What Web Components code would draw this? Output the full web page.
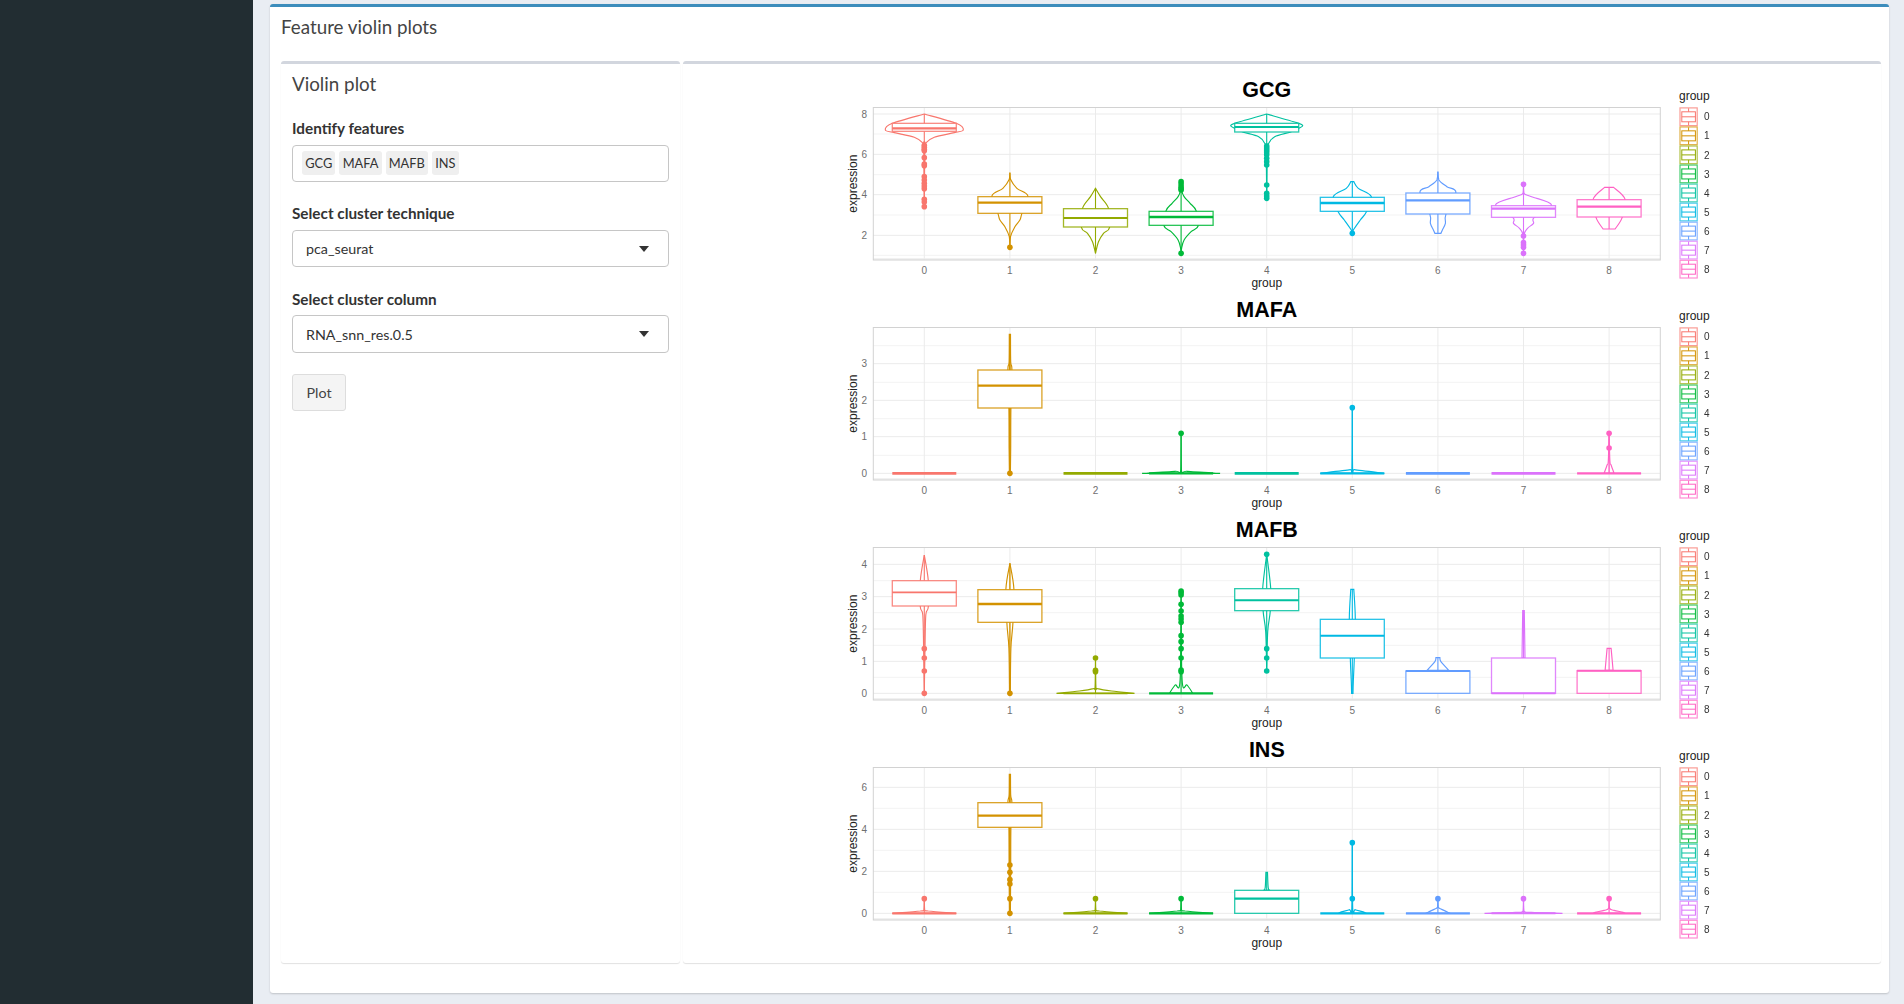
<!DOCTYPE html>
<html lang="en">
<head>
<meta charset="utf-8">
<title>Feature violin plots</title>
<style>
  html, body { margin: 0; height: 100%; overflow: hidden; background: #e9edf3; }
  body { font-family: Lato, "Noto Sans", sans-serif; color: #333; }
</style>
</head>
<body>
<dash-shell>
  <plot-card heading="Feature violin plots">
    <sub-box slot="left">
      <h3-title>Violin plot</h3-title>
      <form-field label="Identify features" first>
        <chip-input><tag-chip>GCG</tag-chip><tag-chip>MAFA</tag-chip><tag-chip>MAFB</tag-chip><tag-chip>INS</tag-chip></chip-input>
      </form-field>
      <form-field label="Select cluster technique">
        <select-box>pca_seurat</select-box>
      </form-field>
      <form-field label="Select cluster column" tight>
        <select-box tall>RNA_snn_res.0.5</select-box>
      </form-field>
      <plain-button>Plot</plain-button>
    </sub-box>
    <sub-box slot="right" plots>
      <violin-plot feature="GCG"></violin-plot>
      <violin-plot feature="MAFA"></violin-plot>
      <violin-plot feature="MAFB"></violin-plot>
      <violin-plot feature="INS"></violin-plot>
    </sub-box>
  </plot-card>
</dash-shell>

<script>
// ggplot default hues, one per cluster
const HUES = ["#F8766D", "#D39200", "#93AA00", "#00BA38", "#00C19F", "#00B9E3", "#619CFF", "#DB72FB", "#FF61C3"];

// all y values below are read off 3x crops: y = crop pixel, hw = half width in real px
const FLAT = { v: [], b: [535, 535, 535], mw: 2.6 };
const FEATURES = {
  GCG: {
    shift: -12,
    ticks: [[8, 162], [6, 283], [4, 404], [2, 526]],
    minor: [222, 344, 465, 586],
    groups: [
      { v: [[162, 0], [190, 32], [210, 39], [218, 30], [232, 10], [250, 1], [262, .5], [440, 0]], b: [190, 205, 214], w: [162, 440], p: [256, 262, 268, 272, 293, 312, 317, 350, 360, 370, 378, 386, 418, 426, 440], mw: 2.4 },
      { v: [[338, 0], [358, .6], [385, 7], [408, 18], [460, 12], [480, 10], [500, 5], [530, .6], [562, 0]], b: [410, 428, 460], w: [338, 562], p: [562], mw: 2.4 },
      { v: [[385, 0], [410, 5], [445, 13], [503, 14], [520, 8], [545, 3], [580, 0]], b: [446, 474, 501], w: [385, 580], p: [], mw: 2 },
      { v: [[365, 0], [390, .5], [410, 3], [430, 9], [452, 15], [498, 17], [515, 10], [540, 3], [565, .5], [580, 0]], b: [454, 471, 496], w: [365, 580], p: [365, 372, 380, 386, 390, 580], mw: 2.4 },
      { v: [[162, 0], [188, 30], [197, 36], [205, 32], [216, 24], [230, 8], [250, 2], [270, .6], [415, 0]], b: [190, 201, 216], w: [162, 415], p: [258, 264, 270, 276, 284, 295, 305, 315, 375, 400, 408, 415], mw: 2 },
      { v: [[365, 1.5], [385, 6], [410, 19], [456, 14], [480, 8], [510, 1], [520, 0]], b: [412, 429, 454], w: [365, 520], p: [520], mw: 2.4 },
      { v: [[335, 0], [360, 1], [380, 9], [397, 18], [463, 8], [490, 7.5], [510, 4.5], [520, 3]], b: [399, 421, 462], w: [335, 520], p: [], mw: 2.2 },
      { v: [[373, 0], [400, .5], [410, 8], [435, 28], [473, 10.5], [490, 10], [505, 4], [525, .5], [580, 0]], b: [437, 446, 472], w: [373, 580], p: [373, 528, 548, 555, 562, 580], mw: 2.2 },
      { v: [[382, 4.5], [418, 16], [473, 13], [507, 6]], b: [419, 440, 471], w: [382, 507], p: [], mw: 2.2 }
    ]
  },
  MAFA: {
    shift: 3,
    ticks: [[3, 206], [2, 316], [1, 425], [0, 535]],
    minor: [152, 262, 371, 481],
    groups: [
      FLAT,
      { v: [[118, .6], [200, .8], [225, 2], [339, 1], [460, .8], [535, .5]], b: [225, 272, 339], w: [118, 535], p: [535], mw: 2.2, ww: 1.8 },
      FLAT,
      { v: [[415, 0], [525, .3], [529, 6], [535, 39]], b: [535, 535, 535], w: [415, 535], p: [415], mw: 2.2 },
      FLAT,
      { v: [[338, 0], [520, .3], [524, 2], [535, 32]], b: [535, 535, 535], w: [338, 535], p: [338], mw: 2.2 },
      FLAT,
      FLAT,
      { v: [[415, 0], [498, .8], [510, 2], [535, 5]], b: [535, 535, 535], w: [415, 535], p: [415, 459], mw: 2.2, ww: 1.4 }
    ]
  },
  MAFB: {
    shift: 3,
    ticks: [[4, 148], [3, 245], [2, 342], [1, 439], [0, 535]],
    minor: [197, 293, 391, 487],
    groups: [
      { v: [[120, 0], [197, 4], [275, 4], [300, 1.5], [400, .7], [535, 0]], b: [197, 232, 273], w: [120, 535], p: [401, 429, 468, 535], mw: 1.8 },
      { v: [[145, 0], [222, 4], [325, 3], [400, 1], [535, .4]], b: [224, 267, 322], w: [145, 535], p: [535], mw: 2.4, ww: 1.4 },
      { v: [[429, 0], [516, .4], [521, 2], [528, 16], [535, 39]], b: [535, 535, 535], w: [429, 535], p: [429, 466, 470], mw: 1.8 },
      { v: [[228, 0], [495, 1], [510, 6], [532, 11], [535, 11]], b: [535, 535, 535], w: [228, 535], p: [228, 233, 240, 268, 288, 303, 312, 322, 362, 380, 401, 429, 465, 470], mw: 2.2 },
      { v: [[118, 0], [220, 4], [290, 3.5], [350, 1], [468, 0]], b: [221, 256, 287], w: [118, 468], p: [118, 401, 429, 468], mw: 2 },
      { v: [[223, 1.5], [312, 3], [430, 2], [500, 1], [535, .7]], b: [313, 362, 429], w: [223, 535], p: [], mw: 2 },
      { v: [[428, 2], [440, 3], [466, 11]], b: [468, 468, 535], w: [428, 468], p: [], mw: 2 },
      { v: [[287, .8], [429, 1.5]], b: [429, 535, 535], w: [287, 429], p: [], mw: 2 },
      { v: [[400, 2], [466, 4]], b: [467, 467, 535], w: [400, 467], p: [], mw: 2 }
    ]
  },
  INS: {
    shift: 3,
    ticks: [[6, 157], [4, 283], [2, 409], [0, 535]],
    minor: [220, 346, 472],
    groups: [
      { v: [[491, 0], [524, .4], [528, 4], [535, 32]], b: [535, 535, 535], w: [491, 535], p: [491], mw: 2.4 },
      { v: [[118, .6], [180, .8], [203, 2], [277, 1], [400, .8], [535, .5]], b: [203, 242, 277], w: [118, 535], p: [390, 412, 434, 447, 491, 535], mw: 2.2, ww: 1.8 },
      { v: [[491, 0], [524, .4], [528, 4], [535, 32]], b: [535, 535, 535], w: [491, 535], p: [491], mw: 2.4 },
      { v: [[491, 0], [524, .4], [528, 4], [535, 32]], b: [535, 535, 535], w: [491, 535], p: [491], mw: 2.4 },
      { v: [[412, .8], [458, 1.5], [466, 3]], b: [466, 491, 535], w: [412, 466], p: [], mw: 2.4 },
      { v: [[323, 0], [518, .4], [524, 3], [530, 10], [535, 14]], b: [535, 535, 535], w: [323, 535], p: [323, 491], mw: 2.2 },
      { v: [[491, 0], [516, .4], [522, 3], [530, 9], [535, 12]], b: [535, 535, 535], w: [491, 535], p: [491], mw: 2.4 },
      { v: [[491, 0], [528, .5], [532, 8], [535, 39]], b: [535, 535, 535], w: [491, 535], p: [491], mw: 2 },
      { v: [[491, 0], [520, .4], [526, 5], [532, 14], [535, 16]], b: [535, 535, 535], w: [491, 535], p: [491], mw: 2.2 }
    ]
  }
};

class DashShell extends HTMLElement {
  constructor() {
    super();
    this.attachShadow({ mode: "open" }).innerHTML = `
    <style>
    :host { display: grid; grid-template-columns: 253px 1fr; height: 1004px; }
    aside { background: #222d32; }
    main { padding: 4px 15px 11px 17px; min-width: 0; }
    </style>
    <aside></aside>
    <main><slot></slot></main>`;
  }
}
customElements.define("dash-shell", DashShell);

class PlotCard extends HTMLElement {
  constructor() {
    super();
    this.attachShadow({ mode: "open" }).innerHTML = `
    <style>
    :host {
      display: flex;
      flex-direction: column;
      height: 989px;
      box-sizing: border-box;
      background: #fff;
      border-top: 3px solid #3c8dbc;
      border-radius: 3px;
      box-shadow: 0 1px 2px rgba(0, 0, 0, .18);
    }
    header {
      height: 54px;
      box-sizing: border-box;
      padding: 8px 0 0 11px;
      font-size: 18.8px;
      line-height: 24px;
      color: #444;
    }
    .row {
      display: grid;
      grid-template-columns: 398.5px 1198px;
      gap: 3.5px;
      padding-left: 11px;
    }
    </style>
    <header></header>
    <div class="row"><slot name="left"></slot><slot name="right"></slot></div>`;
    this.shadowRoot.querySelector("header").textContent = this.getAttribute("heading");
  }
}
customElements.define("plot-card", PlotCard);

class SubBox extends HTMLElement {
  constructor() {
    super();
    this.attachShadow({ mode: "open" }).innerHTML = `
    <style>
    :host {
      display: flex;
      flex-direction: column;
      height: 902px;
      box-sizing: border-box;
      border-top: 3px solid #d2d6de;
      border-radius: 3px;
      box-shadow: 0 1px 1px rgba(0, 0, 0, .12);
      padding: 8px 11px 0 11px;
    }
    :host([plots]) { padding: 8px 0 0; align-items: center; }
    </style>
    <slot></slot>`;
  }
}
customElements.define("sub-box", SubBox);

class H3Title extends HTMLElement {
  constructor() {
    super();
    this.attachShadow({ mode: "open" }).innerHTML = `
    <style>
    :host { display: block; font-size: 18.8px; line-height: 24px; color: #444; margin-bottom: 20px; }
    </style>
    <slot></slot>`;
  }
}
customElements.define("h3-title", H3Title);

class FormField extends HTMLElement {
  constructor() {
    super();
    this.attachShadow({ mode: "open" }).innerHTML = `
    <style>
    :host { display: block; margin-bottom: 20px; }
    :host([first]) { margin-bottom: 19px; }
    :host([tight]) { margin-bottom: 21px; }
    label { display: block; font-size: 15.3px; font-weight: 700; line-height: 24px; margin-bottom: 5px; color: #333; }
    :host([tight]) label { margin-bottom: 4px; }
    </style>
    <label></label>
    <slot></slot>`;
    this.shadowRoot.querySelector("label").textContent = this.getAttribute("label");
  }
}
customElements.define("form-field", FormField);

class ChipInput extends HTMLElement {
  constructor() {
    super();
    this.attachShadow({ mode: "open" }).innerHTML = `
    <style>
    :host {
      display: flex;
      gap: 4px;
      height: 37px;
      box-sizing: border-box;
      padding: 5px 9px;
      background: #fff;
      border: 1px solid #c6c6c6;
      border-radius: 4px;
    }
    </style>
    <slot></slot>`;
  }
}
customElements.define("chip-input", ChipInput);

class TagChip extends HTMLElement {
  constructor() {
    super();
    this.attachShadow({ mode: "open" }).innerHTML = `
    <style>
    :host {
      display: block;
      height: 24px;
      padding: 0 3.2px;
      background: #efefef;
      border-radius: 3px;
      font-size: 12.8px;
      line-height: 24px;
      color: #333;
    }
    </style>
    <slot></slot>`;
  }
}
customElements.define("tag-chip", TagChip);

class SelectBox extends HTMLElement {
  constructor() {
    super();
    this.attachShadow({ mode: "open" }).innerHTML = `
    <style>
    :host {
      display: flex;
      align-items: center;
      justify-content: space-between;
      height: 37px;
      box-sizing: border-box;
      padding: 0 19px 0 13px;
      background: #fff;
      border: 1px solid #c6c6c6;
      border-radius: 4px;
      font-size: 14.3px;
      color: #333;
    }
    :host([tall]) { height: 38px; }
    i { border: 5px solid transparent; border-top: 6px solid #333; border-bottom: 0; }
    </style>
    <span><slot></slot></span><i></i>`;
  }
}
customElements.define("select-box", SelectBox);

class PlainButton extends HTMLElement {
  constructor() {
    super();
    this.attachShadow({ mode: "open" }).innerHTML = `
    <style>
    :host {
      display: flex;
      align-items: center;
      justify-content: center;
      width: 54px;
      height: 37px;
      box-sizing: border-box;
      background: #f4f4f4;
      border: 1px solid #ddd;
      border-radius: 3px;
      font-size: 14.3px;
      color: #444;
    }
    </style>
    <slot></slot>`;
  }
}
customElements.define("plain-button", PlainButton);

class ViolinPlot extends HTMLElement {
  constructor() {
    super();
    const name = this.getAttribute("feature");
    const data = FEATURES[name];
    this.attachShadow({ mode: "open" }).innerHTML = `
    <style>
    :host { display: block; width: 900px; height: 220px; flex: none; }
    svg { display: block; overflow: visible; }
    text { font-family: "Liberation Sans", Arial, sans-serif; }
    .title { font-size: 21.5px; font-weight: 700; fill: #000; text-anchor: middle; }
    .axis { font-size: 12px; fill: #222; }
    .tick { font-size: 10px; fill: #6f6f6f; }
    .leg { font-size: 10px; fill: #333; }
    .marks { filter: blur(.3px); }
    </style>
    ${this.draw(name, data)}`;
  }

  // crop pixel -> local svg y
  y(data, cy) {
    return +(cy / 3 + data.shift).toFixed(2);
  }

  outline(cx, pts) {
    // Catmull-Rom through one side of the violin, going out on the right, back on the left
    const side = (dir, list) => {
      let d = "";
      for (let i = 0; i < list.length - 1; i++) {
        const p0 = list[Math.max(i - 1, 0)], p1 = list[i], p2 = list[i + 1], p3 = list[Math.min(i + 2, list.length - 1)];
        const c1x = Math.max(p1[0] + (p2[0] - p0[0]) / 6, 0), c1y = p1[1] + (p2[1] - p0[1]) / 6;
        const c2x = Math.max(p2[0] - (p3[0] - p1[0]) / 6, 0), c2y = p2[1] - (p3[1] - p1[1]) / 6;
        d += `C${(cx + dir * c1x).toFixed(2)} ${c1y.toFixed(2)} ${(cx + dir * c2x).toFixed(2)} ${c2y.toFixed(2)} ${(cx + dir * p2[0]).toFixed(2)} ${p2[1].toFixed(2)}`;
      }
      return d;
    };
    const first = pts[0];
    const rev = [...pts].reverse();
    return `M${cx + first[0]} ${first[1]}${side(1, pts)}L${cx - rev[0][0]} ${rev[0][1]}${side(-1, rev)}Z`;
  }

  group(data, g, i) {
    const cx = 92.3 + 85.6 * i;
    const col = HUES[i];
    const Y = (v) => this.y(data, v);
    let s = "";
    if (g.v.length) {
      s += `<path d="${this.outline(cx, g.v.map(([c, h]) => [h, Y(c)]))}" fill="#fff" fill-opacity=".5" stroke="${col}" stroke-width="1.15"/>`;
    }
    if (g.w) {
      s += `<line x1="${cx}" x2="${cx}" y1="${Y(g.w[0])}" y2="${Y(g.w[1])}" stroke="${col}" stroke-width="${g.ww || 1.1}"/>`;
    }
    const [top, med, bot] = g.b.map(Y);
    if (bot > top) {
      s += `<rect x="${cx - 32}" y="${top}" width="64" height="${bot - top}" fill="#fff" stroke="${col}" stroke-width="1.3" stroke-opacity=".85"/>`;
    }
    s += `<line x1="${cx - 32}" x2="${cx + 32}" y1="${med}" y2="${med}" stroke="${col}" stroke-width="${g.mw}"/>`;
    (g.p || []).forEach((p) => {
      s += `<circle cx="${cx}" cy="${Y(p)}" r="2.8" fill="${col}"/>`;
    });
    return s;
  }

  legendKey(i) {
    const y0 = 35.3 + 19.05 * i;
    const x = 847.4, col = HUES[i];
    const mid = y0 + 9.5;
    return `<g stroke="${col}" fill="none">
      <rect x="${x + .6}" y="${y0 + .6}" width="17.2" height="17.7" stroke-width="1.2" stroke-opacity=".72"/>
      <line x1="${x + 9.2}" x2="${x + 9.2}" y1="${y0 + 1}" y2="${y0 + 18}"/>
      <rect x="${x + 2.4}" y="${mid - 5}" width="13.6" height="10" fill="#fff"/>
      <line x1="${x + 2.4}" x2="${x + 16}" y1="${mid}" y2="${mid}"/>
    </g><text class="leg" x="872" y="${mid + 3.6}">${i}</text>`;
  }

  draw(name, data) {
    const left = 41.3, right = 828.3, top = 35.5, bottom = 188;
    let grid = "";
    data.minor.forEach((c) => {
      grid += `<line x1="${left}" x2="${right}" y1="${this.y(data, c)}" y2="${this.y(data, c)}" stroke="#f3f3f3"/>`;
    });
    data.ticks.forEach(([, c]) => {
      grid += `<line x1="${left}" x2="${right}" y1="${this.y(data, c)}" y2="${this.y(data, c)}" stroke="#ebebeb"/>`;
    });
    HUES.forEach((_, i) => {
      const x = 92.3 + 85.6 * i;
      grid += `<line x1="${x}" x2="${x}" y1="${top}" y2="${bottom}" stroke="#ebebeb"/>`;
    });
    grid += `<line x1="${left}" x2="${right}" y1="${bottom - 1}" y2="${bottom - 1}" stroke="#ececec" stroke-width="1.4"/>`;
    const yTicks = data.ticks.map(([lab, c]) => `<text class="tick" x="35" y="${this.y(data, c) + 3.6}" text-anchor="end">${lab}</text>`).join("");
    const xTicks = HUES.map((_, i) => `<text class="tick" x="${92.3 + 85.6 * i}" y="201.7" text-anchor="middle">${i}</text>`).join("");
    return `<svg width="900" height="220" viewBox="0 0 900 220">
      <text class="title" x="434.8" y="24.5">${name}</text>
      <g class="marks">
        ${grid}
        <rect x="${left}" y="${top}" width="${right - left}" height="${bottom - top}" fill="none" stroke="#d2d2d2" stroke-width="1"/>
        ${data.groups.map((g, i) => this.group(data, g, i)).join("")}
        ${HUES.map((_, i) => this.legendKey(i)).join("")}
      </g>
      ${yTicks}${xTicks}
      <text class="axis" x="434.8" y="215" text-anchor="middle">group</text>
      <text class="axis" transform="translate(24.7 111.7) rotate(-90)" text-anchor="middle">expression</text>
      <text class="axis" x="847" y="28">group</text>
    </svg>`;
  }
}
customElements.define("violin-plot", ViolinPlot);
</script>
</body>
</html>
